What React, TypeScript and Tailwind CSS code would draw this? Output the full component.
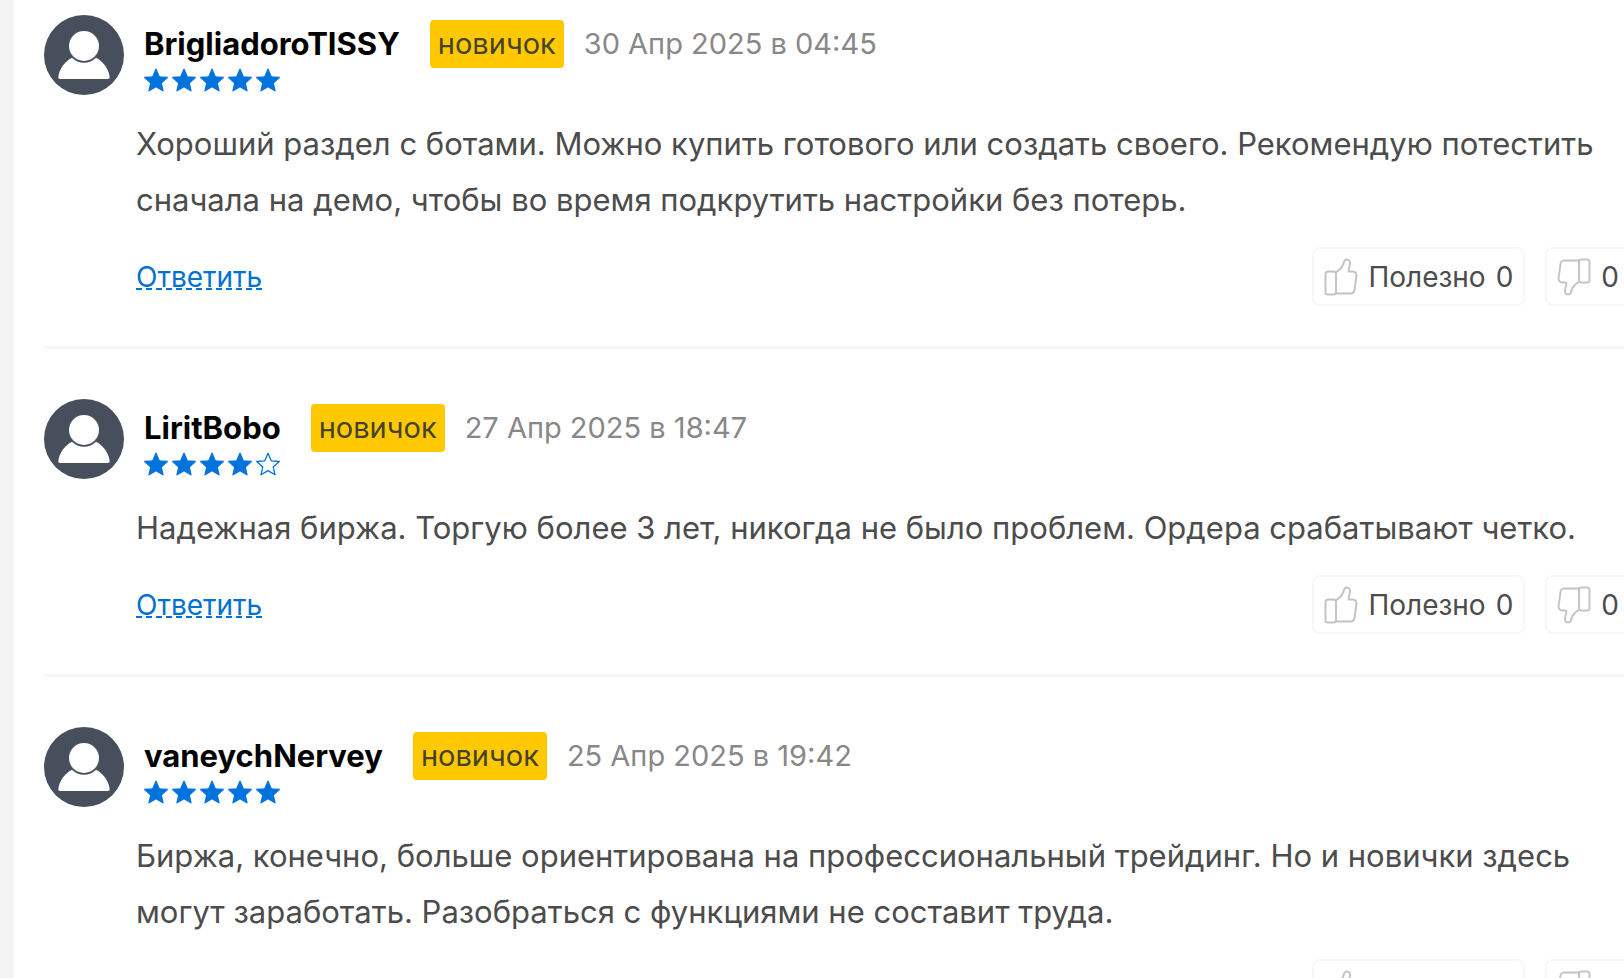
type Review = {
  id: string;
  author: string;
  rank: string;
  date: string;
  rating: number;
  text: string;
  likes: number;
  dislikes: number;
};

const reviews: Review[] = [
  {
    id: "r1",
    author: "BrigliadoroTISSY",
    rank: "новичок",
    date: "30 Апр 2025 в 04:45",
    rating: 5,
    text: "Хороший раздел с ботами. Можно купить готового или создать своего. Рекомендую потестить сначала на демо, чтобы во время подкрутить настройки без потерь.",
    likes: 0,
    dislikes: 0,
  },
  {
    id: "r2",
    author: "LiritBobo",
    rank: "новичок",
    date: "27 Апр 2025 в 18:47",
    rating: 4,
    text: "Надежная биржа. Торгую более 3 лет, никогда не было проблем. Ордера срабатывают четко.",
    likes: 0,
    dislikes: 0,
  },
  {
    id: "r3",
    author: "vaneychNervey",
    rank: "новичок",
    date: "25 Апр 2025 в 19:42",
    rating: 5,
    text: "Биржа, конечно, больше ориентирована на профессиональный трейдинг. Но и новички здесь могут заработать. Разобраться с функциями не составит труда.",
    likes: 0,
    dislikes: 0,
  },
];

function Avatar() {
  return (
    <svg viewBox="0 0 80 80" className="size-20 shrink-0" aria-hidden="true">
      <circle cx="40" cy="40" r="40" fill="#464f5b" />
      <path
        d="M28 42.7C20.5 46.5 15.3 54 14.3 62Q14.1 64 16 64H64Q65.9 64 65.7 62C64.7 54 59.5 46.5 52 42.7A16.7 16.7 0 0 1 28 42.7Z"
        fill="#fff"
      />
      <circle cx="40" cy="31" r="15" fill="#fff" />
    </svg>
  );
}

function Star({ filled }: { filled: boolean }) {
  return (
    <svg viewBox="0 0 24 24" className="size-6" aria-hidden="true">
      <path
        d="M12 1.2L15.2 8.8L23.3 9.5L17.2 14.9L19 22.8L12 18.6L5 22.8L6.8 14.9L0.7 9.5L8.8 8.8Z"
        fill={filled ? "#0073df" : "none"}
        stroke="#0073df"
        strokeWidth="1.3"
        strokeLinejoin="round"
      />
    </svg>
  );
}

function Thumb({ down = false }: { down?: boolean }) {
  return (
    <svg
      viewBox="0 0 34 38"
      className={down ? "h-[38px] w-[34px] shrink-0 rotate-180" : "h-[38px] w-[34px] shrink-0"}
      fill="none"
      stroke="#c4c4c4"
      strokeWidth="2"
      strokeLinejoin="round"
      strokeLinecap="round"
      aria-hidden="true"
    >
      <rect x="1.5" y="13.5" width="10.5" height="23" rx="2.5" />
      <path d="M12 14.5C15 12.5 17.5 10 18.8 7.5C19.8 5.5 19.5 1.5 22.8 1.5C26 1.5 26.5 4.5 25.7 7.5C25 9.5 24.6 11.5 24.6 13.5H28.5C31.5 13.5 32.7 15.5 32.4 18L30.6 31.5C30.2 34.5 29 35.5 26.5 35.5H12" />
    </svg>
  );
}

function ReviewCard({ review }: { review: Review }) {
  return (
    <article className="border-b-3 border-[#f6f6f6] pt-[50px] pb-10">
      <header className="flex gap-5">
        <Avatar />
        <div className="pt-[5px]">
          <div className="flex h-12 items-center">
            <span className="text-[31px] leading-12 font-bold text-black">{review.author}</span>
            <span className="ml-[30px] rounded-[4px] bg-[#ffc800] px-2 text-[29px] leading-12 text-[#434328]">
              {review.rank}
            </span>
            <time className="ml-5 text-[29px] leading-12 text-[#888]">{review.date}</time>
          </div>
          <div className="flex gap-1" role="img" aria-label={`Оценка ${review.rating} из 5`}>
            {[1, 2, 3, 4, 5].map((n) => (
              <Star key={n} filled={n <= review.rating} />
            ))}
          </div>
        </div>
      </header>

      <p className="mt-[21px] mr-6 pl-[92px] text-[31px] leading-14 text-[#4c4c4c]">{review.text}</p>

      <footer className="mt-[19px] flex items-center justify-between pl-[92px]">
        <a
          href="#reply"
          className="border-b-2 border-dashed border-[#0071d5] pt-0.5 text-[28px] leading-[22px] text-[#0071d5]"
        >
          Ответить
        </a>
        <div className="-mr-[7px] flex gap-5">
          <button
            type="button"
            className="flex h-[59px] items-center gap-2.5 rounded-lg border-2 border-[#f7f7f7] px-2.5 text-[28px] text-[#4c4c4c]"
          >
            <Thumb />
            <span>Полезно</span>
            <span>{review.likes}</span>
          </button>
          <button
            type="button"
            aria-label="Бесполезно"
            className="flex h-[59px] items-center gap-2.5 rounded-lg border-2 border-[#f7f7f7] px-2.5 text-[28px] text-[#4c4c4c]"
          >
            <Thumb down />
            <span>{review.dislikes}</span>
          </button>
        </div>
      </footer>
    </article>
  );
}

export default function App() {
  return (
    <main className="h-screen overflow-hidden border-l-14 border-[#f4f4f4] bg-white pl-[30px] font-['Inter','Liberation_Sans',sans-serif]">
      <div className="-mt-[35px]">
        {reviews.map((r) => (
          <ReviewCard key={r.id} review={r} />
        ))}
      </div>
    </main>
  );
}
